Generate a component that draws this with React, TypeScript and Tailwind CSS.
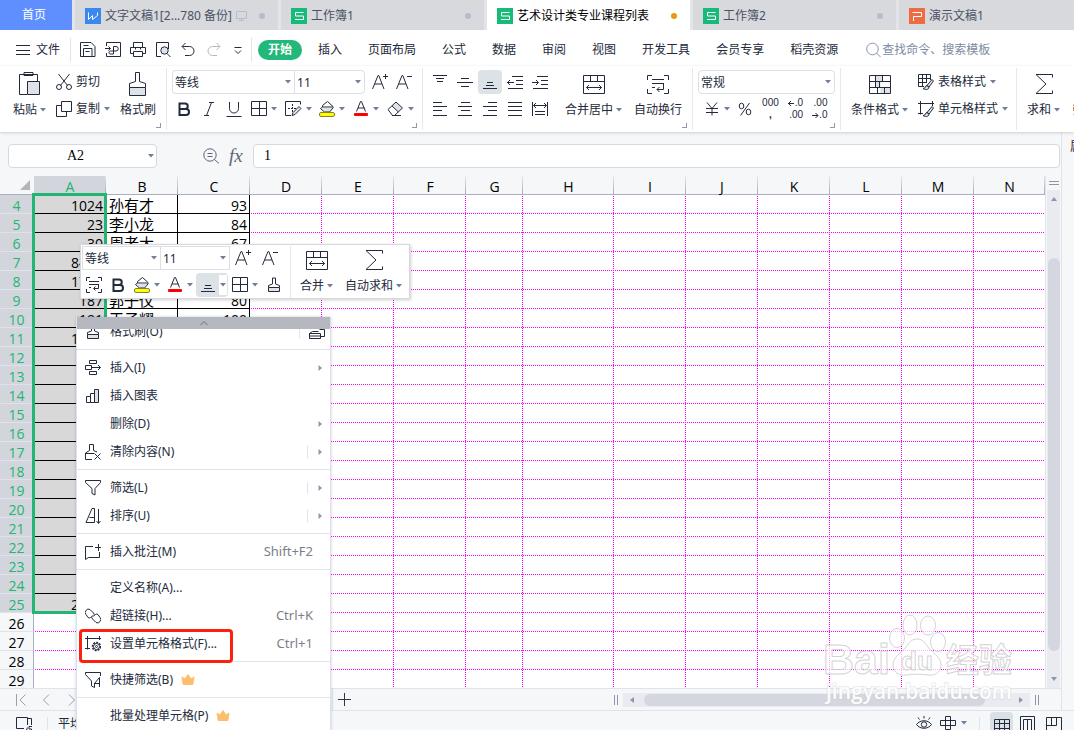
import React from 'react';

type IconProps = { w?: number; h?: number; sw?: number; className?: string; children: React.ReactNode };

const Icon: React.FC<IconProps> = ({ w = 16, h = 16, sw = 1, className = '', children }) => (
  <svg
    width={w}
    height={h}
    viewBox={`0 0 ${w} ${h}`}
    fill="none"
    stroke="currentColor"
    strokeWidth={sw}
    className={`shrink-0 ${className}`}
    aria-hidden="true"
  >
    {children}
  </svg>
);

const Caret = () => (
  <svg width="6" height="4" viewBox="0 0 6 4" className="shrink-0 text-[#6f7e99]" aria-hidden="true">
    <path d="M0 0h6L3 3.6z" fill="currentColor" />
  </svg>
);

const GRAY = '#dfe2e6';

const icons = {
  menu: <Icon w={14}><path d="M0 3.5h14M0 8.5h14M0 12.5h14" /></Icon>,
  save: <Icon><path d="M.5.5h10.500l4 4v10h-14.500zM3.500 14.500v-8h8.500v8M3.500 3.500h5M5.500 9.500h4" /></Icon>,
  exportPdf: <Icon><path d="M1.500 4V.5h14v14h-14V11M0 6.500h5.500M3.500 4.500l2 2-2 2M8.500 12V4.500h2.500a2 2 0 010 4.500H5.500a1.500 1.500 0 100 3h3" /></Icon>,
  print: <Icon><path d="M3.500 5V.5h9V5M3.500 11.500h-3v-6h15v6h-3M3.500 9.500h9v5h-9zM5.500 5.500v2M10.500 5.500v2" /></Icon>,
  preview: (
    <Icon>
      <path d="M6 14.500H1.500V.5h12V7" />
      <circle cx="9.500" cy="8.500" r="3.700" fill={GRAY} />
      <path d="M12 11.500l3.500 3.500" />
    </Icon>
  ),
  undo: <Icon><path d="M5.500 1L2 4.500 5.500 8M2.500 4.500H9.500a4.500 4.500 0 010 9H5" /></Icon>,
  redo: <Icon className="text-[#b4b7bd]"><path d="M11.500 1L15 4.500 11.500 8M14.500 4.500H7.500a4.500 4.500 0 000 9H12" /></Icon>,
  more: <Icon><path d="M4.500 5.500h7M5 8.500l3 3 3-3" /></Icon>,
  search: <Icon className="text-[#8b98ad]"><circle cx="6.500" cy="7" r="5.800" /><path d="M10.500 11l4 4" /></Icon>,
  paste: (
    <Icon w={22} h={26}>
      <path d="M8 23.500H.5V3.500h18v7M5 1.500h9v3h-9z" />
      <path d="M8.500 10.500h12v13h-12z" fill={GRAY} />
    </Icon>
  ),
  cut: (
    <Icon>
      <path d="M2.500 0l9 11.500M13.500 0l-9 11.500" />
      <circle cx="3" cy="13" r="2.500" />
      <circle cx="13" cy="13" r="2.500" />
    </Icon>
  ),
  copy: <Icon><path d="M5.500.5h10v10h-10zM5.500 4.500h-5v11h10v-5" /></Icon>,
  painter: (
    <Icon w={20} h={26}>
      <path d="M1.500 16.500v-4l6-2v-9h4v9l6 2v4" />
      <path d="M1.500 16.500h16v8h-16z" fill={GRAY} />
    </Icon>
  ),
  bold: <Icon sw={2}><path d="M3.500 2.500h5.500a2.700 2.700 0 010 5.500H3.500zM3.500 8h6.500a3 3 0 010 6H3.500zM3.500 2v12.500" /></Icon>,
  italic: <Icon><path d="M8 1.500h5M3 14.500h5M10.500 1.500l-5 13" /></Icon>,
  underline: <Icon><path d="M3.500 1v6.500a4.500 4.500 0 009 0V1M.5 15.500h15" /></Icon>,
  border: <Icon><path d="M.5.500h15v14H.5zM8.500.5v14M.5 7.500h15" /></Icon>,
  drawBorder: (
    <Icon w={17}>
      <path d="M6 14.500H.5V.5h15v3" />
      <path d="M3 7.500h8M7.500 3v9" strokeDasharray="2 1" />
      <path d="M7 14.500l1-3 6-6 2 2L10 13.500z" fill={GRAY} />
    </Icon>
  ),
  fill: (
    <Icon>
      <path d="M3 7h10.500l-3.500 4H5.500z" fill={GRAY} stroke="none" />
      <path d="M3.500 4.500L8.500.5l5.500 5v1.500l-3.500 4h-5L1.500 7.500l2-1.500h10M3.500 4.500V6" />
      <rect x=".5" y="11.500" width="15" height="4" rx="1.500" fill="#ff0" stroke="#857f3a" />
    </Icon>
  ),
  fontColor: (
    <Icon>
      <path d="M3.500 10.500L7.500.5h1l4 10M5 7h6.500" />
      <rect x="1" y="12" width="14" height="3" rx="1" fill="#f00" stroke="none" />
    </Icon>
  ),
  eraser: (
    <Icon w={17}>
      <path d="M5 5l4-4 6.500 6-4 4z" fill={GRAY} stroke="none" />
      <path d="M1 8.500l8-7.500 6.500 6-8 7.500h-2zM5 5l6.500 6M5 14.500h9" />
    </Icon>
  ),
  fontUp: <Icon w={17}><path d="M.5 15L6 1.500h.8L12 15M2.500 10h7.500M11 2.500h5M13.500 0v5" /></Icon>,
  fontDown: <Icon w={17}><path d="M.5 15L6 1.500h.8L12 15M2.500 10h7.500M11 2.500h5" /></Icon>,
  alignTop: <Icon><path d="M1 1.500h14M4 4.500h8M5 7.500h6" /></Icon>,
  alignMiddle: <Icon><path d="M4 4.500h8M0 8.500h16M4 12.500h8" /></Icon>,
  alignBottom: <Icon><path d="M5 8.500h6M4 11.500h8M1 14.500h14" /></Icon>,
  outdent: <Icon><path d="M5 2.500h11M9 6.500h7M9 10.500h7M1 14.500h15M0 8.500h7M3 6L.5 8.500 3 11" /></Icon>,
  indent: <Icon><path d="M5 2.500h11M9 6.500h7M9 10.500h7M1 14.500h15M0 8.500h6M4 6l2.500 2.500L4 11" /></Icon>,
  left: <Icon><path d="M1 1.500h9M1 5.500h14M1 9.500h9M1 14.500h14" /></Icon>,
  center: <Icon><path d="M4 1.500h9M1 5.500h14M4 9.500h9M1 14.500h14" /></Icon>,
  right: <Icon><path d="M6 1.500h9M1 5.500h14M6 9.500h9M1 14.500h14" /></Icon>,
  justify: <Icon><path d="M1 1.500h14M1 5.500h14M1 9.500h14M1 14.500h14" /></Icon>,
  distribute: <Icon><path d="M.5 1v14M15.500 1v14M2 4.500h12M4 2L1.500 4.500 4 7M12 2l2.500 2.500L12 7M3 10.500h10M3 13.500h10" /></Icon>,
  merge: <Icon w={24} h={24}><path d="M1.500 2.500h21v18h-21zM1.500 8.500h21M8.500 2.500v6M15.500 2.500v6M4.500 14.500h15M7 12l-2.500 2.500L7 17M17 12l2.500 2.500L17 17" /></Icon>,
  wrap: <Icon w={24} h={24}><path d="M1.500 7V2.500H6M18 2.500h4.500V7M1.500 16v4.500H6M18 20.500h4.500V16M6 6.500h12M6 10.500h12M6 14.500h3M17.500 10.500v6H11M13.500 14L11 16.500l2.500 2.500" /></Icon>,
  wrapSmall: <Icon><path d="M.5 4V.5H4M12 .5h3.500V4M.5 12v3.500H4M12 15.500h3.500V12M3 4.500h10M3 7.500h10M3 10.500h2M12.500 7.500v4H8M9.500 9.500L7.500 11.500l2 2" /></Icon>,
  yen: <Icon><path d="M3 1.500l5 6 5-6M8 7.500v7M2 7.500h12M2 11.500h12" /></Icon>,
  percent: (
    <Icon>
      <ellipse cx="4.500" cy="5" rx="2.300" ry="2.800" />
      <ellipse cx="11.500" cy="11" rx="2.300" ry="2.800" />
      <path d="M12.500 2L3.500 14.500" />
    </Icon>
  ),
  conditional: (
    <Icon w={24} h={24}>
      <path d="M7.500 2.500h7v6h-7zM12.500 14.500h10v6h-10zM7.500 8.500h5v6h-5z" fill={GRAY} stroke="none" />
      <path d="M1.500 2.500h21v18h-21zM1.500 8.500h21M1.500 14.500h21M7.500 2.500v12M14.500 2.500v6M11.500 8.500v6M9.500 14.500v6M16.500 14.500v6" />
    </Icon>
  ),
  tableStyle: (
    <Icon>
      <path d="M6 12.500H.5V.5h12V6M.5 4.500h12M.5 8.500H9M4.500.5v12M8.500.5V9" />
      <path d="M9 11.500l5-6 1.500 1.500-4.500 6zM9 11.500c-2 0-1 3-4 3 2 1.500 6 1.500 6-1.500z" fill={GRAY} />
    </Icon>
  ),
  cellStyle: (
    <Icon>
      <path d="M0 2.500h16M2.500 0v13.500M0 12.500h5M14.500 0v5" />
      <path d="M9 11.500l5-6 1.500 1.500-4.500 6zM9 11.500c-2 0-1 3-4 3 2 1.500 6 1.500 6-1.500z" fill={GRAY} />
    </Icon>
  ),
  sum: <Icon w={20} h={24}><path d="M18.500 4.500V1.500H2L12 11 2 20.500h16.500v-3" /></Icon>,
  magnify: <Icon w={17}><circle cx="7" cy="7" r="6.200" /><path d="M4.500 5.500h5M4.500 8.500h5M11.500 11.500l4.500 4" /></Icon>,
  brush: (
    <Icon>
      <path d="M2.500 10.500V8.500l4-1.500v-6h3v6l4 1.500v2" />
      <path d="M2.500 10.500h11v4h-11z" fill={GRAY} />
    </Icon>
  ),
  insert: <Icon><path d="M4.500.5h7v3h-7zM4.500 11.500h7v3h-7zM.5 5.500h6v4h-6zM7 7.500h8.500M13 5l2.500 2.500L13 10" /></Icon>,
  chart: <Icon><path d="M10 2h3v12h-3z" fill={GRAY} stroke="none" /><path d="M1.500 8.500h4v6h-4zM5.500 5.500h4v9h-4zM9.500 1.500h4v13h-4z" /></Icon>,
  clear: <Icon><path d="M7 15.500H.5V9l4-2.500V.5h4v6L12 8M.5 9.500H9M9.500 9.500l6 6M15.500 9.500l-6 6" /></Icon>,
  filter: <Icon><path d="M.5.500h15v2l-5.500 6v6.500l-3-1.500v-5L.5 2.500z" /></Icon>,
  sort: <Icon><path d="M13.500 1v14M11.500 13l2 2.500 2-2.500M1 14.500L7 .5h2.500v14zM4.500 9.500h5" /></Icon>,
  comment: <Icon><path d="M8 2.500H.5v13l3-2h11V8M13.500 0v7M10 3.500h6" /></Icon>,
  link: (
    <Icon>
      <path d="M6.500 8.500l-1 1a2 2 0 01-2.500 0L1 6.500A3 3 0 011 2.500a3 3 0 014-1L8.500 5a2.500 2.500 0 010 3.500" />
      <path d="M9.500 7.500l1-1a2 2 0 012.500 0l2 3a3 3 0 010 4 3 3 0 01-4 1L7.500 11a2.500 2.500 0 010-3.500" />
    </Icon>
  ),
  format: (
    <Icon>
      <path d="M0 2.500h16M2.500 0v13.500M0 12.500h5M14.500 0v4" />
      <circle cx="11.500" cy="10.500" r="4" strokeWidth="1.500" strokeDasharray="2 1" />
      <circle cx="11.500" cy="10.500" r="3" />
      <circle cx="11.500" cy="10.500" r="1" />
    </Icon>
  ),
  quickFilter: <Icon><path d="M15.500 4V.5H.5v2l6 6.500v5l3 1.500V11M14.500 5.500v9.500M14.500 5.500l-5 6h5" /></Icon>,
  grid: <Icon><path d="M.5.500h15v13H.5zM.5 4.500h15M.5 9.500h15M5.500.5v13M10.500.5v13" /></Icon>,
  page: <Icon><path d="M.5.500h14v15H.5zM3.500 3.500h8v12h-8zM7.500 3.500v12" /></Icon>,
  split: <Icon><path d="M.5.500h15v15H.5zM5.500.5v8M10.500.5v8M.5 8.500h10" /></Icon>,
  eye: <Icon><path d="M.5 9.500C4 4.500 12 4.500 15.500 9.500 12 14.500 4 14.500.5 9.500zM8 1v2.500M2 2.500l1.500 2M14 2.500l-1.500 2" /><circle cx="8" cy="9.500" r="2.700" /></Icon>,
  cross: <Icon><path d="M5.500 1.500h5v13h-5zM.5 5.500h15v5H.5z" /></Icon>,
  device: <Icon w={17}><path d="M11.500 3V.5H.5v11H8M3 14.500h4M11.500 8V1.500h4V8M10 14.500l1.500-4M16 9.500h-3v2.500h2.500v3H12" /></Icon>,
};

const appLogos = {
  w: { bg: 'bg-[#3a87f0]', d: 'M3.500 4.500v7l4-4v4l5-4V4.500' },
  s: { bg: 'bg-[#17ba79]', d: 'M12.500 4.500h-8v3.500h8v3.500h-8.500' },
  p: { bg: 'bg-[#ee6c43]', d: 'M3.500 4.500h9v4h-8v4.500' },
};

const AppLogo = ({ kind }: { kind: keyof typeof appLogos }) => (
  <span className={`shrink-0 ${appLogos[kind].bg}`}>
    <Icon className="text-white"><path d={appLogos[kind].d} /></Icon>
  </span>
);

const fileTabs: { name: string; kind: keyof typeof appLogos; monitor?: boolean; active?: boolean }[] = [
  { name: '文字文稿1[2...780 备份]', kind: 'w', monitor: true },
  { name: '工作簿1', kind: 's' },
  { name: '艺术设计类专业课程列表', kind: 's', active: true },
  { name: '工作簿2', kind: 's' },
];

const TabBar = () => (
  <div className="flex h-[30px] shrink-0 gap-[3px] overflow-hidden bg-[#e2e4e8] text-[#4a5266]">
    <button className="w-[72px] shrink-0 bg-[#5f8fff] pr-1 text-white">首页</button>
    {fileTabs.map((tab) => (
      <button
        key={tab.name}
        className={`flex w-[203px] shrink-0 items-center gap-1 pt-px pr-[13px] pl-[10px] whitespace-nowrap ${
          tab.active ? 'bg-white text-black' : 'bg-[#d8d9dc]'
        }`}
      >
        <AppLogo kind={tab.kind} />
        {tab.name}
        {tab.monitor && (
          <Icon w={12} h={12} className="text-[#b7bdcc]"><path d="M.5 1.500h10v7H.5zM5.500 8.500v2M3 10.500h5" /></Icon>
        )}
        <span className={`ml-auto size-[6px] rounded-full ${tab.active ? 'bg-[#e8990c]' : 'bg-[#b4bccd]'}`} />
      </button>
    ))}
    <button className="flex flex-1 items-center gap-1 bg-[#d8d9dc] pt-px pl-[10px] whitespace-nowrap">
      <AppLogo kind="p" />
      演示文稿1
    </button>
  </div>
);

const quickTools = [
  { name: '保存', icon: icons.save },
  { name: '输出为PDF', icon: icons.exportPdf },
  { name: '打印', icon: icons.print },
  { name: '打印预览', icon: icons.preview },
  { name: '撤销', icon: icons.undo },
  { name: '恢复', icon: icons.redo },
  { name: '更多', icon: icons.more },
];

const menus = ['插入', '页面布局', '公式', '数据', '审阅', '视图', '开发工具', '会员专享', '稻壳资源'];

const MenuBar = () => (
  <div className="flex h-9 shrink-0 items-center bg-white pt-1 pl-4 whitespace-nowrap">
    <button className="flex items-center gap-[6px]">{icons.menu}文件</button>
    <span className="ml-[10px] h-6 w-px bg-[#e1e3e7]" />
    <div className="ml-[9px] flex gap-[9px]">
      {quickTools.map((t) => (
        <button key={t.name} aria-label={t.name}>{t.icon}</button>
      ))}
    </div>
    <span className="ml-[5px] h-6 w-px bg-[#e1e3e7]" />
    <button className="ml-[6px] h-5 w-11 rounded-full bg-[#22b87a] font-bold text-white">开始</button>
    <nav className="ml-4 flex gap-[26px]">
      {menus.map((m) => (
        <button key={m}>{m}</button>
      ))}
    </nav>
    <label className="ml-7 flex flex-1 items-center text-[#7d8aa3]">
      {icons.search}
      <input aria-label="查找命令" placeholder="查找命令、搜索模板" className="w-full bg-transparent placeholder:text-[#7d8aa3]" />
    </label>
  </div>
);

const SelectBox = ({ value, label, className }: { value: string; label: string; className: string }) => (
  <div className={`relative h-6 border border-[#dcdfe4] bg-white ${className}`}>
    <select aria-label={label} className="h-full w-full appearance-none pt-px pl-[2px]">
      <option>{value}</option>
    </select>
    <span className="pointer-events-none absolute inset-y-0 right-[3px] flex items-center"><Caret /></span>
  </div>
);

type ToolProps = { name: string; icon: React.ReactNode; caret?: boolean; text?: string; className?: string };

const Tool = ({ name, icon, caret, text, className = '' }: ToolProps) => (
  <button aria-label={name} className={`flex h-6 shrink-0 items-center gap-1 whitespace-nowrap ${className}`}>
    {icon}
    {text}
    {caret && <Caret />}
  </button>
);

const BigTool = ({ name, icon, caret }: { name: string; icon: React.ReactNode; caret?: boolean }) => (
  <button className="flex shrink-0 flex-col whitespace-nowrap">
    <span className="flex h-[27px] w-full items-end justify-center">{icon}</span>
    <span className="flex h-6 items-center gap-[3px] pt-px">{name}{caret && <Caret />}</span>
  </button>
);

const Group = ({ children, corner, className = '' }: { children: React.ReactNode; corner?: boolean; className?: string }) => (
  <div className={`relative flex h-[62px] shrink-0 border-r border-[#e6e8eb] pt-[2px] ${className}`}>
    {children}
    {corner && <span className="absolute right-[5px] bottom-[2px] size-[5px] border-r border-b border-[#8b98ad]" />}
  </div>
);

const row = 'flex items-center';
const rows = 'flex flex-col gap-[3px]';

const alignTop = [
  { name: '顶端对齐', icon: icons.alignTop },
  { name: '垂直居中', icon: icons.alignMiddle },
  { name: '底端对齐', icon: icons.alignBottom, on: true },
  { name: '减少缩进', icon: icons.outdent },
  { name: '增加缩进', icon: icons.indent },
];
const alignBottom = [
  { name: '左对齐', icon: icons.left },
  { name: '水平居中', icon: icons.center },
  { name: '右对齐', icon: icons.right },
  { name: '两端对齐', icon: icons.justify },
  { name: '分散对齐', icon: icons.distribute },
];

const decimals = "flex flex-col items-end font-['Liberation_Sans',sans-serif] text-[10px] leading-3";

const Ribbon = () => (
  <div className="relative z-10 flex h-[66px] shrink-0 overflow-hidden bg-white pt-[2px] shadow-[0_1px_3px_rgba(0,0,0,0.16)]">
    <Group corner className="gap-[10px] pr-[10px] pl-[13px]">
      <BigTool name="粘贴" icon={icons.paste} caret />
      <div className={rows}>
        <Tool name="剪切" icon={icons.cut} text="剪切" />
        <Tool name="复制" icon={icons.copy} text="复制" caret />
      </div>
      <BigTool name="格式刷" icon={icons.painter} />
    </Group>
    <Group corner className="pr-2 pl-[5px]">
      <div className={rows}>
        <div className={row}>
          <SelectBox label="字体" value="等线" className="w-[122px] rounded-l-sm border-r-0" />
          <SelectBox label="字号" value="11" className="w-[71px] rounded-r-sm" />
          <Tool name="增大字号" icon={icons.fontUp} className="ml-[7px]" />
          <Tool name="减小字号" icon={icons.fontDown} className="ml-[7px]" />
        </div>
        <div className={`${row} pl-1`}>
          <Tool name="加粗" icon={icons.bold} />
          <Tool name="倾斜" icon={icons.italic} className="ml-[9px]" />
          <Tool name="下划线" icon={icons.underline} className="ml-[9px]" />
          <Tool name="边框" icon={icons.border} caret className="ml-[9px]" />
          <Tool name="绘图边框" icon={icons.drawBorder} caret className="ml-2" />
          <Tool name="填充颜色" icon={icons.fill} caret className="ml-[7px]" />
          <Tool name="字体颜色" icon={icons.fontColor} caret className="ml-2" />
          <Tool name="清除" icon={icons.eraser} caret className="ml-2" />
        </div>
      </div>
    </Group>
    <Group corner className="gap-[13px] pr-[10px] pl-[5px]">
      <div className={rows}>
        <div className={`${row} gap-px`}>
          {alignTop.map((a) => (
            <Tool key={a.name} name={a.name} icon={a.icon} className={`w-6 justify-center rounded-sm ${a.on ? 'bg-[#dde2e7]' : ''}`} />
          ))}
        </div>
        <div className={`${row} gap-px`}>
          {alignBottom.map((a) => (
            <Tool key={a.name} name={a.name} icon={a.icon} className="w-6 justify-center" />
          ))}
        </div>
      </div>
      <div className="flex gap-3">
        <BigTool name="合并居中" icon={icons.merge} caret />
        <BigTool name="自动换行" icon={icons.wrap} />
      </div>
    </Group>
    <Group corner className="pr-[5px] pl-[5px]">
      <div className={rows}>
        <SelectBox label="数字格式" value="常规" className="w-[137px] rounded-sm" />
        <div className={`${row} pl-[6px]`}>
          <Tool name="货币" icon={icons.yen} caret />
          <Tool name="百分比" icon={icons.percent} className="ml-[7px]" />
          <button aria-label="千位分隔" className="ml-[9px] flex flex-col items-center font-['Liberation_Sans',sans-serif] text-[10px] leading-3">
            <span>000</span>
            <span className="font-bold">,</span>
          </button>
          <button aria-label="增加小数位" className={`ml-[9px] ${decimals}`}>
            <span className="flex items-center"><Icon w={7} h={8}><path d="M0 4.500h6M3 2L.5 4.500 3 7" /></Icon>.0</span>
            <span>.00</span>
          </button>
          <button aria-label="减少小数位" className={`ml-[9px] ${decimals}`}>
            <span>.00</span>
            <span className="flex items-center"><Icon w={7} h={8}><path d="M0 4.500h6M3.500 2L6 4.500 3.500 7" /></Icon>.0</span>
          </button>
        </div>
      </div>
    </Group>
    <Group className="gap-[10px] pr-2 pl-[10px]">
      <BigTool name="条件格式" icon={icons.conditional} caret />
      <div className={rows}>
        <Tool name="表格样式" text="表格样式" icon={icons.tableStyle} caret />
        <Tool name="单元格样式" text="单元格样式" icon={icons.cellStyle} caret />
      </div>
    </Group>
    <div className="flex gap-3 pt-[2px] pl-[10px]">
      <BigTool name="求和" icon={icons.sum} caret />
      <BigTool name="筛选" icon={icons.filter} caret />
    </div>
  </div>
);

const FormulaBar = () => (
  <div className="flex h-11 shrink-0 items-center pt-1 pr-px pl-2">
    <div className="relative h-6 w-[149px] shrink-0 rounded-sm border border-[#d6d9de] bg-white">
      <input aria-label="名称框" defaultValue="A2" className="h-full w-full pr-[14px] text-center font-['Liberation_Serif','Noto_Sans_CJK_SC',serif] text-sm text-black" />
      <span className="pointer-events-none absolute inset-y-0 right-[2px] flex items-center"><Caret /></span>
    </div>
    <button aria-label="浏览公式" className="ml-[46px] text-[#5b6579]">{icons.magnify}</button>
    <button aria-label="插入函数" className="ml-[9px] w-6 shrink-0 text-left font-['Liberation_Serif',serif] text-[19px] leading-5 text-[#5b6579] italic">fx</button>
    <input aria-label="编辑栏" defaultValue="1" className="h-6 min-w-0 flex-1 rounded-sm border border-[#d6d9de] bg-white pl-[10px] font-['Liberation_Serif','Noto_Sans_CJK_SC',serif] text-sm text-black" />
  </div>
);

const columns = [
  { name: 'A', w: 'w-[72px]' },
  { name: 'B', w: 'w-[72px]' },
  { name: 'C', w: 'w-[72px]' },
  { name: 'D', w: 'w-[72px]' },
  { name: 'E', w: 'w-[72px]' },
  { name: 'F', w: 'w-[72px]' },
  { name: 'G', w: 'w-[57px]' },
  { name: 'H', w: 'w-[91px]' },
  { name: 'I', w: 'w-[72px]' },
  { name: 'J', w: 'w-[72px]' },
  { name: 'K', w: 'w-[72px]' },
  { name: 'L', w: 'w-[72px]' },
  { name: 'M', w: 'w-[72px]' },
  { name: 'N', w: '' },
];

const cells: Record<number, string[]> = {
  4: ['1024', '孙有才', '93'],
  5: ['23', '李小龙', '84'],
  6: ['30', '周老大', '67'],
  7: ['8400', '', ''],
  8: ['1700', '', ''],
  9: ['187', '郭子仪', '80'],
  10: ['191', '王子耀', '100'],
  11: ['1000', '', ''],
  25: ['2000', '', ''],
};

const rowNumbers = Array.from({ length: 26 }, (_, i) => i + 4);

// Dotted grid lines, one dot every two pixels along the bottom and right edges.
// Rows and columns can have odd sizes, so each parity has its own start and the dots run on from cell to cell.
const dots = {
  evenRow:
    'bg-[repeating-linear-gradient(90deg,transparent_0_1px,#f0f_1px_2px),repeating-linear-gradient(0deg,transparent_0_1px,#f0f_1px_2px)]',
  oddRow:
    'bg-[repeating-linear-gradient(90deg,transparent_0_1px,#f0f_1px_2px),repeating-linear-gradient(0deg,#f0f_0_1px,transparent_1px_2px)]',
  evenRowShifted:
    'bg-[repeating-linear-gradient(90deg,#f0f_0_1px,transparent_1px_2px),repeating-linear-gradient(0deg,transparent_0_1px,#f0f_1px_2px)]',
  oddRowShifted:
    'bg-[repeating-linear-gradient(90deg,#f0f_0_1px,transparent_1px_2px),repeating-linear-gradient(0deg,#f0f_0_1px,transparent_1px_2px)]',
};

const cellClass = (r: number, c: number) => {
  if (c < 3 && r <= 25) {
    const bg = c === 0 ? 'bg-[#d8d8d8]' : '';
    const align = c === 1 ? 'text-left pl-[3px] text-[15px]' : 'text-right pr-[2px]';
    return `border-r border-b border-black ${bg} ${align}`;
  }
  if (c === columns.length - 1) {
    return 'bg-[repeating-linear-gradient(90deg,transparent_0_1px,#f0f_1px_2px)] bg-[length:100%_1px] bg-bottom bg-no-repeat';
  }
  const shifted = columns[c].name === 'H';
  const image = r % 2 === 0 ? (shifted ? dots.evenRowShifted : dots.evenRow) : shifted ? dots.oddRowShifted : dots.oddRow;
  return `${image} bg-[length:100%_1px,1px_100%] bg-[position:bottom,right] bg-no-repeat`;
};

const Sheet = () => (
  <div className="relative min-h-0 min-w-0 flex-1 overflow-hidden bg-white">
    <table className="w-full table-fixed border-separate border-spacing-0 font-['Open_Sans','Noto_Sans_CJK_SC',sans-serif] text-sm text-black">
      <colgroup>
        <col className="w-[34px]" />
        {columns.map((c) => (
          <col key={c.name} className={c.w} />
        ))}
      </colgroup>
      <thead>
        <tr className="h-[19px] bg-[#f5f7f9]">
          <th className="border-b border-[#aab0c4] p-0">
            <svg width="10" height="10" viewBox="0 0 10 10" className="ml-5" aria-label="全选">
              <path d="M10 0v10H0z" fill="#b3b5b9" />
            </svg>
          </th>
          {columns.map((c) => (
            <th
              key={c.name}
              className={`h-[19px] border-b border-[#aab0c4] bg-[linear-gradient(#e4e7ec,#a3aabd)] bg-[length:1px_100%] bg-right bg-no-repeat p-0 pt-1 leading-[14px] font-normal ${
                c.name === 'A' ? 'bg-[#d2d5dc] text-[#22b573]' : ''
              }`}
            >
              {c.name}
            </th>
          ))}
        </tr>
      </thead>
      <tbody>
        {rowNumbers.map((r) => (
          <tr key={r}>
            <th
              className={`h-[19px] border-r border-b border-r-[#aab0c4] border-b-[#dde2ec] p-0 pt-1 leading-[14px] font-normal ${
                r <= 25 ? 'bg-[#d2d5dc] text-[#22b573]' : 'bg-[#f5f7f9]'
              }`}
            >
              {r}
            </th>
            {columns.map((c, i) => (
              <td key={c.name} className={`h-[19px] p-0 pt-[3px] leading-[15px] whitespace-nowrap ${cellClass(r, i)}`}>
                {cells[r]?.[i]}
              </td>
            ))}
          </tr>
        ))}
      </tbody>
    </table>
    <div className="pointer-events-none absolute top-[17px] left-8 h-[421px] w-[75px] border-3 border-[#22b573]" />
  </div>
);

const Arrow = ({ d }: { d: string }) => (
  <svg width="8" height="8" viewBox="0 0 8 8" className="shrink-0 text-[#8a96ad]" aria-hidden="true">
    <path d={d} fill="currentColor" />
  </svg>
);

const VerticalScroll = () => (
  <div className="flex w-4 shrink-0 flex-col items-center border-l border-[#dfe3ea]">
    <span className="mt-[5px] h-1 w-[10px] border-y border-[#8a96ad]" />
    <div className="mt-[5px] flex w-[13px] flex-1 flex-col items-center bg-[#e9ebf1] py-[5px]">
      <Arrow d="M1 6l3-4 3 4z" />
      <span className="mt-[55px] mb-6 w-3 flex-1 rounded-full bg-[#d4d7df]" />
      <Arrow d="M1 2h6L4 6z" />
    </div>
  </div>
);

const Splitter = () => <span className="h-[10px] w-[4px] shrink-0 border-x border-[#8a96ad]" />;

const SheetBar = () => (
  <div className="flex h-[22px] shrink-0 items-center border-t border-[#dfe3ea] text-[#9aa0aa]">
    <div className="flex w-[332px] shrink-0 gap-[10px] pl-[13px]">
      <button aria-label="第一张"><Icon><path d="M3.500 2v12M12.500 2.500L7 8l5.500 5.500" /></Icon></button>
      <button aria-label="上一张"><Icon><path d="M10 2.500L4.500 8l5.500 5.500" /></Icon></button>
      <button aria-label="下一张"><Icon><path d="M4 2.500L9.500 8 4 13.500" /></Icon></button>
    </div>
    <div className="flex h-full w-[282px] shrink-0 items-center border-l border-[#dfe3ea] pl-1">
      <button aria-label="新建工作表" className="text-[#2b3648]"><Icon><path d="M1 7.500h13M7.500 1v13" /></Icon></button>
    </div>
    <Splitter />
    <div className="ml-[5px] flex h-[14px] flex-1 items-center bg-[#e9ebf1] px-[5px]">
      <Arrow d="M6 1v6L2 4z" />
      <span className="mr-8 ml-2 h-3 flex-1 rounded-full bg-[#d4d7df]" />
      <Arrow d="M2 1v6l4-3z" />
    </div>
    <span className="ml-[5px] flex"><Splitter /></span>
    <span className="w-[22px] shrink-0" />
  </div>
);

const StatusBar = () => (
  <div className="flex h-5 shrink-0 items-start overflow-hidden border-t border-[#dfe3ea] pr-3 pl-4">
    <button aria-label="状态" className="mt-[6px]">{icons.device}</button>
    <span className="mt-[6px] ml-[14px] h-5 w-px bg-[#dfe3ea]" />
    <span className="mt-1 ml-[10px] leading-[18px]">平均值=1024</span>
    <div className="ml-auto flex items-start">
      <button aria-label="护眼模式" className="mt-1">{icons.eye}</button>
      <button aria-label="阅读模式" className="mt-1 ml-2 flex items-center gap-[5px]">{icons.cross}<Caret /></button>
      <span className="mt-[6px] ml-3 h-5 w-px bg-[#dfe3ea]" />
      <button aria-label="普通视图" className="mt-px ml-[10px] h-6 w-[23px] rounded-t-sm bg-[#dae0e7] pt-[6px] pl-1">{icons.grid}</button>
      <button aria-label="分页预览" className="mt-[5px] ml-[7px]">{icons.page}</button>
      <button aria-label="拆分视图" className="mt-[6px] ml-[10px]">{icons.split}</button>
    </div>
  </div>
);

const MiniToolbar = () => (
  <div className="absolute top-[244px] left-20 z-20 flex h-[55px] w-[330px] border border-[#d5d8dd] bg-white pt-px pl-px shadow-[1px_1px_3px_rgba(0,0,0,0.2)]">
    <div className="flex w-[209px] flex-col gap-[3px] border-r border-[#e6e8eb]">
      <div className={row}>
        <SelectBox label="字体" value="等线" className="w-[78px] border-r-0" />
        <SelectBox label="字号" value="11" className="w-[70px]" />
        <Tool name="增大字号" icon={icons.fontUp} className="ml-[5px]" />
        <Tool name="减小字号" icon={icons.fontDown} className="ml-[10px]" />
      </div>
      <div className={`${row} pl-1`}>
        <Tool name="自动换行" icon={icons.wrapSmall} />
        <Tool name="加粗" icon={icons.bold} className="ml-2" />
        <Tool name="填充颜色" icon={icons.fill} caret className="ml-2" />
        <Tool name="字体颜色" icon={icons.fontColor} caret className="ml-[7px]" />
        <button aria-label="底端对齐" className="ml-[3px] flex h-6 w-8 shrink-0 items-center gap-[3px] rounded-sm bg-[#dde2e7] pl-1">
          {icons.alignBottom}
          <span className="flex h-5 w-2 items-center justify-center bg-white"><Caret /></span>
        </button>
        <Tool name="边框" icon={icons.border} caret className="ml-1" />
        <Tool name="格式刷" icon={icons.brush} className="ml-2" />
      </div>
    </div>
    <div className="flex gap-3 pl-[9px]">
      <BigTool name="合并" icon={icons.merge} caret />
      <BigTool name="自动求和" icon={icons.sum} caret />
    </div>
  </div>
);

const Crown = () => (
  <svg width="14" height="12" viewBox="0 0 14 12" className="ml-2 shrink-0" aria-hidden="true">
    <path d="M1 3l3 2 3-4.500L10 5l3-2-1.200 7.500h-9.600z" fill="#fbbf6b" stroke="#fbbf6b" strokeLinejoin="round" />
  </svg>
);

type MenuItem = { name: string; icon?: React.ReactNode; key?: string; arrow?: boolean; divider?: boolean; vip?: boolean };

const menuGroups: MenuItem[][] = [
  [
    { name: '插入(I)', icon: icons.insert, arrow: true },
    { name: '插入图表', icon: icons.chart },
    { name: '删除(D)', arrow: true },
    { name: '清除内容(N)', icon: icons.clear, arrow: true, divider: true },
  ],
  [
    { name: '筛选(L)', icon: icons.filter, arrow: true, divider: true },
    { name: '排序(U)', icon: icons.sort, arrow: true, divider: true },
  ],
  [{ name: '插入批注(M)', icon: icons.comment, key: 'Shift+F2' }],
  [
    { name: '定义名称(A)...' },
    { name: '超链接(H)...', icon: icons.link, key: 'Ctrl+K' },
    { name: '设置单元格格式(F)...', icon: icons.format, key: 'Ctrl+1' },
  ],
  [{ name: '快捷筛选(B)', icon: icons.quickFilter, vip: true }],
  [{ name: '批量处理单元格(P)', vip: true }],
];

const ContextMenu = () => (
  <div className="absolute top-[317px] bottom-0 left-[76px] z-20 w-[255px] overflow-hidden border-x border-[#dbe0ea] bg-white pt-px shadow-[0_0_3px_rgba(60,80,130,0.25)]">
    <button aria-label="向上滚动" className="absolute inset-x-0 top-0 flex h-3 items-center justify-center bg-[#b5b8bf] text-[#6b7078]">
      <Icon w={8} h={6}><path d="M.5 5L4 1.500 7.500 5" /></Icon>
    </button>
    <div className="flex h-7 items-center pr-1 pl-2">
      <span className="w-[25px]">{icons.brush}</span>
      格式刷(O)
      <span className="ml-auto h-3 w-px bg-[#dfe3ea]" />
      <span className="ml-[9px]"><Icon w={17}><path d="M.5 14.500V9.500l3-2h6M.5 9.500h11v5H.5zM.5 12h11M10.500 5.500h5v7H12" /></Icon></span>
    </div>
    {menuGroups.map((group) => (
      <React.Fragment key={group[0].name}>
        <hr className="mt-[3px] mb-1 border-[#dfe3ea]" />
        {group.map((item) => (
          <button key={item.name} className="flex h-7 w-full items-center pr-[6px] pl-2 whitespace-nowrap">
            <span className="w-[25px]">{item.icon}</span>
            {item.name}
            {item.vip && <Crown />}
            <span className="ml-auto pr-[11px] text-[13px] text-[#7c8088]">{item.key}</span>
            {item.divider && <span className="mr-2 h-3 w-px bg-[#dfe3ea]" />}
            {item.arrow && <Arrow d="M2.500 1v6l3.500-3z" />}
          </button>
        ))}
      </React.Fragment>
    ))}
  </div>
);

const Watermark = () => (
  <svg
    viewBox="0 0 200 100"
    className="pointer-events-none absolute right-[54px] bottom-[20px] z-10 h-[100px] w-[200px]"
    fill="#fff"
    fillOpacity="0.7"
    stroke="#c9c9c9"
    strokeOpacity="0.8"
    aria-hidden="true"
  >
    <g fontFamily="Liberation Sans, Noto Sans CJK SC, sans-serif" fontWeight="bold">
      <text x="3" y="64" fontSize="43">Bai</text>
      <g>
        <ellipse cx="77" cy="28" rx="7.500" ry="9.500" />
        <ellipse cx="90" cy="15" rx="7" ry="10" />
        <ellipse cx="108" cy="15.500" rx="7.500" ry="9.500" />
        <ellipse cx="118" cy="32" rx="7.500" ry="9.500" />
        <path d="M97 29c6 0 8 4 11 8 4 6 13 9 13 18 0 8-7 11-13 10-7-1-15-1-22 0-7 1-13-3-13-10 0-9 9-12 13-18 3-4 5-8 11-8z" />
      </g>
      <text x="81" y="60" fontSize="26">du</text>
      <text x="126" y="62" fontSize="33">经验</text>
    </g>
    <text x="6" y="89" fontSize="21" fontFamily="Open Sans, sans-serif" fontWeight="600" fillOpacity="0.95" strokeWidth="2" strokeOpacity="0.35" paintOrder="stroke">
      jingyan.baidu.com
    </text>
  </svg>
);

const App: React.FC = () => (
  <div className="relative flex h-screen flex-col overflow-hidden bg-[#f5f7f9] font-['Noto_Sans','Noto_Sans_CJK_SC',sans-serif] text-xs text-[#232a3b]">
    <TabBar />
    <MenuBar />
    <Ribbon />
    <div className="flex min-h-0 flex-1">
      <main className="flex min-w-0 flex-1 flex-col">
        <FormulaBar />
        <div className="flex min-h-0 flex-1">
          <Sheet />
          <VerticalScroll />
        </div>
        <SheetBar />
      </main>
      <aside className="w-[13px] shrink-0 overflow-hidden border-l border-[#dfe3ea] pt-[5px] pl-2 leading-5 whitespace-nowrap">属性</aside>
    </div>
    <StatusBar />
    <Watermark />
    <MiniToolbar />
    <ContextMenu />
    <div className="pointer-events-none absolute top-[629px] left-[79px] z-30 h-[34px] w-[154px] rounded-sm border-3 border-[#fb2010]" />
  </div>
);

export default App;
